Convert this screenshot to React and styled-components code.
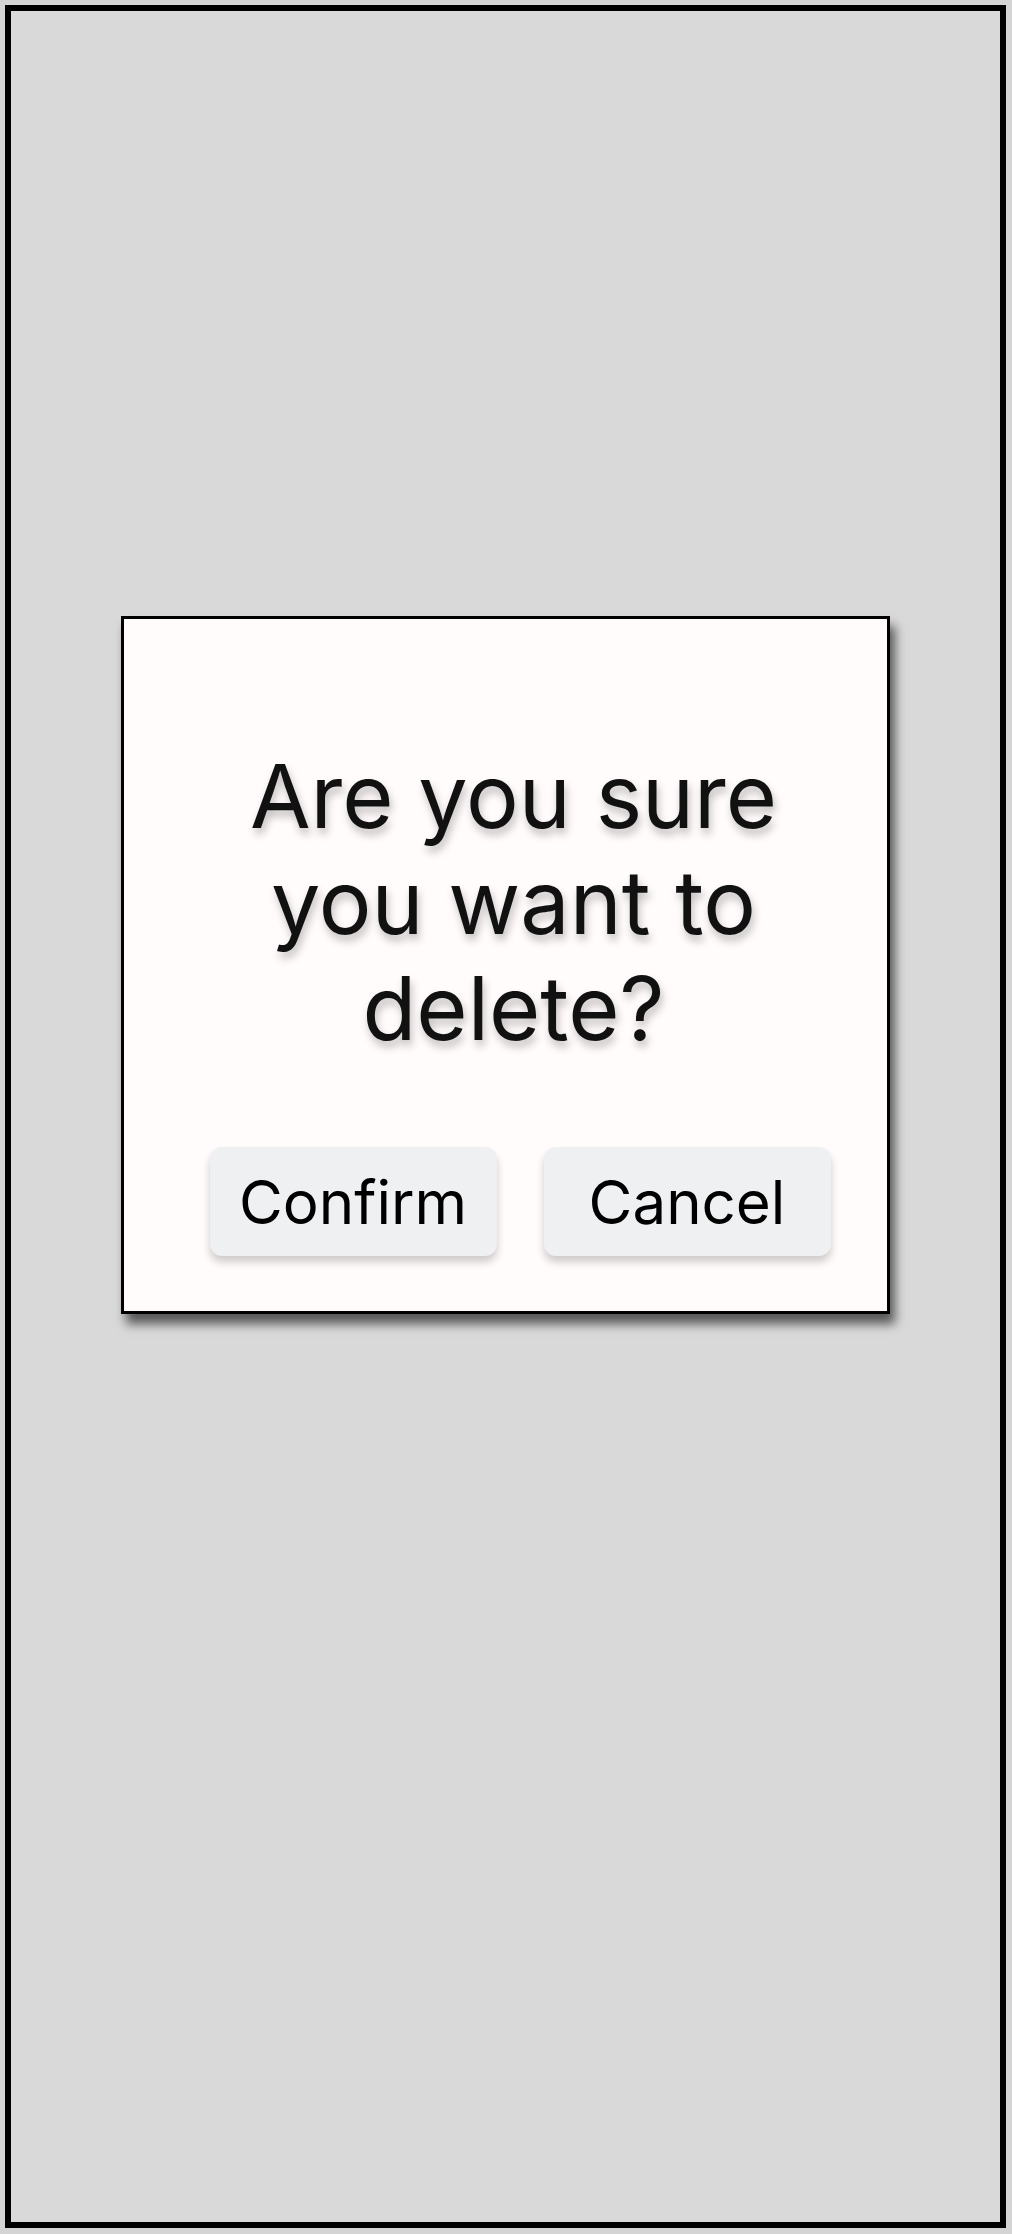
import React from "react";
import styled, { createGlobalStyle } from "styled-components";

const GlobalStyle = createGlobalStyle`
  html, body {
    margin: 0;
    padding: 0;
    background: #d4d4d4;
  }
  body {
    font-family: Inter, "Noto Sans", sans-serif;
  }
  * {
    box-sizing: border-box;
  }
`;

const S = {
  Frame: styled.div`
    margin: 5px 6px 6px 5px;
    width: 1001px;
    height: 2223px;
    border: 6px solid #000;
    background: #d9d9d9;
    display: flex;
    flex-direction: column;
    align-items: center;
    padding-top: 605px;
  `,
  Dialog: styled.div`
    width: 769px;
    height: 698px;
    border: 3px solid #000;
    background: #fffcfb;
    box-shadow: 5px 10px 10px rgba(0, 0, 0, 0.6);
    display: flex;
    flex-direction: column;
    align-items: center;
    padding-top: 124px;
  `,
  Title: styled.h2`
    margin: 0 0 0 16px;
    font-family: Inter, "Noto Sans", sans-serif;
    font-weight: 400;
    font-size: 88px;
    line-height: 106px;
    color: #111;
    text-align: center;
    width: 560px;
    text-shadow: 2px 6px 8px rgba(0, 0, 0, 0.25);
  `,
  Actions: styled.div`
    display: flex;
    gap: 47px;
    margin-top: 86px;
    margin-left: 29px;
  `,
  Button: styled.button`
    width: 287px;
    height: 109px;
    border: none;
    border-radius: 12px;
    background: #eff0f1;
    box-shadow: 0 6px 8px rgba(0, 0, 0, 0.2);
    font-family: Inter, "Noto Sans", sans-serif;
    font-size: 60px;
    font-weight: 400;
    color: #000;
    padding: 0;
    cursor: pointer;
  `,
};

const App = () => {
  return (
    <>
      <GlobalStyle />
      <S.Frame>
        <S.Dialog>
          <S.Title>
            Are you sure you want to delete?
          </S.Title>
          <S.Actions>
            <S.Button>Confirm</S.Button>
            <S.Button>Cancel</S.Button>
          </S.Actions>
        </S.Dialog>
      </S.Frame>
    </>
  );
};

export default App;
